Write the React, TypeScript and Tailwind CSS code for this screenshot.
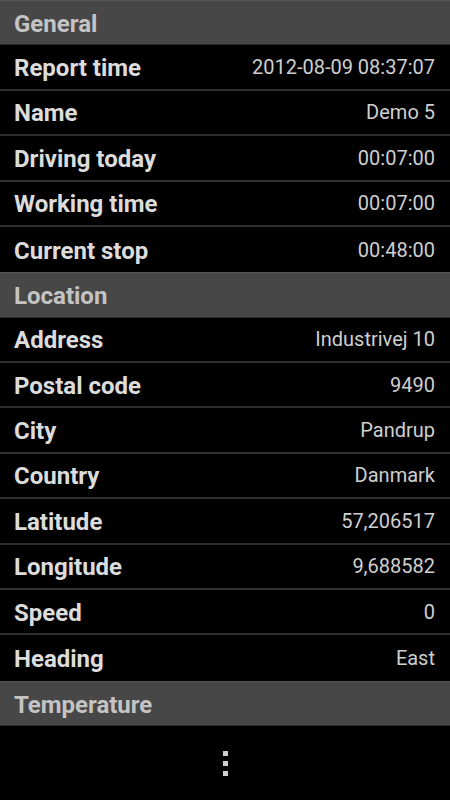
type Row = { label: string; value: string };

const general: Row[] = [
  { label: 'Report time', value: '2012-08-09 08:37:07' },
  { label: 'Name', value: 'Demo 5' },
  { label: 'Driving today', value: '00:07:00' },
  { label: 'Working time', value: '00:07:00' },
  { label: 'Current stop', value: '00:48:00' },
];

const location: Row[] = [
  { label: 'Address', value: 'Industrivej 10' },
  { label: 'Postal code', value: '9490' },
  { label: 'City', value: 'Pandrup' },
  { label: 'Country', value: 'Danmark' },
  { label: 'Latitude', value: '57,206517' },
  { label: 'Longitude', value: '9,688582' },
  { label: 'Speed', value: '0' },
  { label: 'Heading', value: 'East' },
];

function SectionHeader({ title }: { title: string }) {
  return (
    <div className="h-[45.4px] flex items-center px-[14px] bg-[#474747] border-t border-[#555] border-b border-b-[#2a2a2a]">
      <span className="text-[24px] font-bold text-[#c4c4c4] leading-none pt-[3px]">{title}</span>
    </div>
  );
}

function DetailRow({ row, last }: { row: Row; last: boolean }) {
  return (
    <div
      className={
        last
          ? 'h-[45.4px] flex items-center justify-between pl-[14px] pr-[15px]'
          : 'h-[45.4px] flex items-center justify-between pl-[14px] pr-[15px] border-b-2 border-[#2e2e2e]'
      }
    >
      <span className="text-[24px] font-bold text-[#dcdcdc] leading-none pt-[2px]">{row.label}</span>
      <span className="text-[20px] text-[#cfcfcf] leading-none">{row.value}</span>
    </div>
  );
}

export default function App() {
  return (
    <div className="w-[450px] h-[800px] bg-black flex flex-col overflow-hidden font-['Roboto',sans-serif]">
      <div className="flex-1 flex flex-col overflow-hidden">
        <SectionHeader title="General" />
        {general.map((row, i) => (
          <DetailRow key={row.label} row={row} last={i === general.length - 1} />
        ))}
        <SectionHeader title="Location" />
        {location.map((row, i) => (
          <DetailRow key={row.label} row={row} last={i === location.length - 1} />
        ))}
        <SectionHeader title="Temperature" />
      </div>
      <div className="h-[74px] flex items-center justify-center">
        <div className="flex flex-col gap-[5px]">
          <span className="w-[5px] h-[5px] bg-[#d0d0d0]" />
          <span className="w-[5px] h-[5px] bg-[#d0d0d0]" />
          <span className="w-[5px] h-[5px] bg-[#d0d0d0]" />
        </div>
      </div>
    </div>
  );
}
